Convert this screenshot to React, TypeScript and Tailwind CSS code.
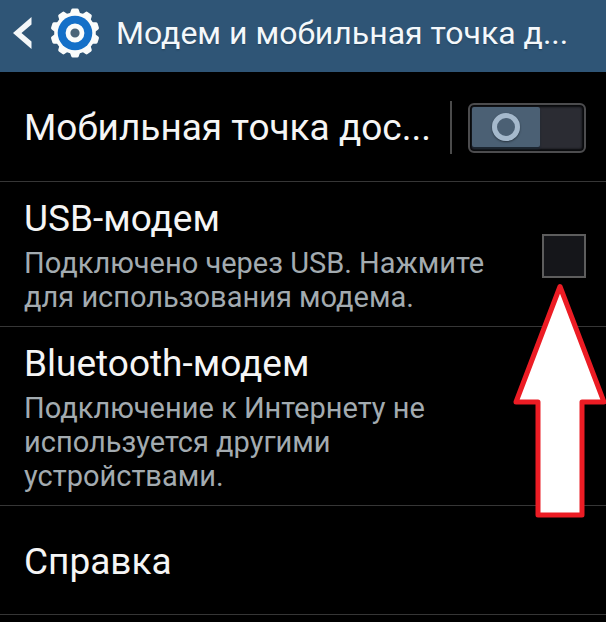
import { useState } from 'react'

function GearIcon() {
  const teeth = Array.from({ length: 10 }, (_, i) => i * 36)

  return (
    <svg width="50" height="50" viewBox="0 0 50 50" aria-hidden="true" className="shrink-0">
      <g fill="#fafcfb">
        {teeth.map((angle) => (
          <path
            key={angle}
            d="M19.6 6.5 L21.2 1.8 Q21.6 0.6 22.8 0.6 H27.2 Q28.4 0.6 28.8 1.8 L30.4 6.5 Z"
            transform={`rotate(${angle} 25 25)`}
          />
        ))}
        <circle cx="25" cy="25" r="20.8" />
      </g>
      <circle cx="25" cy="25" r="17.3" fill="#1470c8" />
      <circle cx="25" cy="25" r="7" fill="#4a6578" stroke="#fafcfb" strokeWidth="4.8" />
    </svg>
  )
}

function PointerArrow() {
  return (
    <svg
      width="94"
      height="236"
      viewBox="0 0 94 236"
      aria-hidden="true"
      className="pointer-events-none absolute -right-5 top-full mt-1"
    >
      <path
        d="M48 4.5 L92 120 H70 V233 H26 V120 H4 Z"
        fill="#fff"
        stroke="#ec1c24"
        strokeWidth="5"
        strokeLinejoin="round"
      />
    </svg>
  )
}

const title = 'text-[37px] leading-[42px] text-[#f5f5f5]'
const summary = 'text-[29px] leading-[34px] text-[#a3abb0]'

export default function App() {
  const [hotspot, setHotspot] = useState(false)
  const [usb, setUsb] = useState(false)

  return (
    <div className="min-h-screen overflow-hidden bg-black font-['Roboto','Liberation_Sans',sans-serif]">
      <header className="flex h-18 items-center bg-[#2f5576] pb-1.5 pl-3">
        <button type="button" aria-label="Назад" className="flex shrink-0 items-center">
          <svg width="22" height="36" viewBox="0 0 22 36" aria-hidden="true">
            <path d="M19.5 2 V9.5 L9.5 18 L19.5 26.5 V34 L1 18 Z" fill="#f4f7f9" />
          </svg>
        </button>
        <div className="ml-4">
          <GearIcon />
        </div>
        <h1 className="ml-4 min-w-0 flex-1 truncate text-[32px] leading-10 text-[#f4f8fb] text-shadow-sm">
          Модем и мобильная точка д...
        </h1>
      </header>

      <ul>
        <li className="flex items-center border-b border-[#363636] pb-[27px] pl-6 pr-5 pt-[29px]">
          <span className={`min-w-0 flex-1 truncate ${title}`}>Мобильная точка дос...</span>
          <span className="mr-4 h-[53px] w-0.5 bg-[#4b4b4b]" />
          <button
            type="button"
            role="switch"
            aria-checked={hotspot}
            aria-label="Мобильная точка доступа"
            onClick={() => setHotspot(!hotspot)}
            className={`flex h-[50px] w-[118px] shrink-0 rounded-md border-2 border-[#4c4c4e] bg-[#2b2c33] p-0.5 shadow-[inset_0_0_2px_2px_#08090b] ${
              hotspot ? 'justify-end' : 'justify-start'
            }`}
          >
            <span className="flex h-10 w-17 items-center justify-center rounded-xs bg-[#4b6074] shadow-[0_2px_2px_#1c2632]">
              <span className="size-7 rounded-full border-5 border-[#a5b9cc] shadow-[0_1px_2px_#26323e]" />
            </span>
          </button>
        </li>

        <li className="flex items-center border-b border-[#363636] pb-3 pl-6 pr-5 pt-4">
          <label htmlFor="usb" className="min-w-0 flex-1 pr-8">
            <span className={`block ${title}`}>USB-модем</span>
            <span className={`mt-1.5 block ${summary}`}>
              Подключено через USB. Нажмите для использования модема.
            </span>
          </label>
          <div className="relative flex shrink-0">
            <input
              id="usb"
              type="checkbox"
              checked={usb}
              onChange={(e) => setUsb(e.target.checked)}
              className="size-11 appearance-none border-2 border-[#5d5d5d] bg-[#15161a] checked:bg-[#1470c8]"
            />
            <PointerArrow />
          </div>
        </li>

        <li className="border-b border-[#363636] pb-3 pl-6 pr-28 pt-4">
          <p className={title}>Bluetooth-модем</p>
          <p className={`mt-1.5 ${summary}`}>
            Подключение к Интернету не используется другими устройствами.
          </p>
        </li>

        <li className="border-b border-[#363636] px-6 pb-[31px] pt-[35px]">
          <p className={title}>Справка</p>
        </li>
      </ul>
    </div>
  )
}
